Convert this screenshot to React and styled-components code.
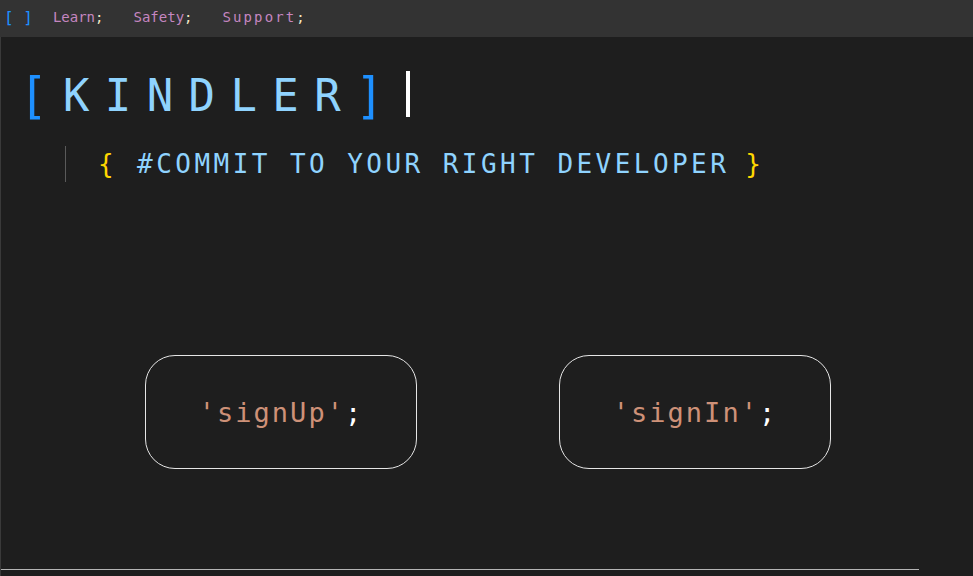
import React from 'react';
import styled, { createGlobalStyle } from 'styled-components';

const Global = createGlobalStyle`
  html, body { margin: 0; padding: 0; background: #1e1e1e; }
  body { font-family: "DejaVu Sans Mono", "Liberation Mono", monospace; }
  #root { height: 576px; }
`;

const Page = styled.div`
  display: flex;
  flex-direction: column;
  height: 576px;
  width: 973px;
  overflow: hidden;
`;

const TopBar = styled.nav`
  display: flex;
  align-items: center;
  height: 34px;
  padding-bottom: 3px;
  flex-shrink: 0;
  background: #333333;
  padding-left: 4px;
  gap: 21px;
  font-size: 14px;
`;

const Brackets = styled.span`
  color: #1e90ff;
  font-size: 16px;
  margin-right: -1px;
`;

const NavLink = styled.a`
  color: #c586c0;
  letter-spacing: ${p => p.$spacing || 0}px;
  margin-right: 9px;
  cursor: pointer;
  & > i { font-style: normal; color: #f5e9c5; }
`;

const Main = styled.main`
  flex: 1;
  display: flex;
  flex-direction: column;
  border-left: 1px solid #3a3a3a;
`;

const Title = styled.h1`
  display: flex;
  align-items: center;
  margin: 30px 0 0 20px;
  height: 56px;
  font-size: 44px;
  font-weight: 400;
  letter-spacing: 15.4px;
  color: #8fd3fe;
`;

const Bracket = styled.span`
  color: #1e90ff;
  display: inline-block;
  transform: scale(1.1, 1.12);
  margin-left: ${p => p.$shift || 0}px;
`;

const Caret = styled.span`
  display: inline-block;
  width: 4px;
  height: 46px;
  background: #ffffff;
  margin: -2px 0 0 7px;
`;

const Subtitle = styled.div`
  display: flex;
  align-items: center;
  margin: 23px 0 0 64px;
  height: 36px;
  border-left: 1px solid #5a5a5a;
  padding-left: 32px;
  font-size: 26px;
  letter-spacing: 3.45px;
  color: #8fd3fe;
`;

const Brace = styled.span`
  color: #ffd700;
  margin: ${p => p.$side === 'left' ? '0 20px 0 0' : '0 0 0 16px'};
`;

const ButtonRow = styled.div`
  display: flex;
  justify-content: space-evenly;
  margin-top: 173px;
  padding-left: 2px;
`;

const CodeButton = styled.button`
  width: 272px;
  height: 114px;
  border: 1px solid #e6e6e6;
  border-radius: 30px;
  background: transparent;
  font-family: inherit;
  font-size: 27px;
  letter-spacing: 2px;
  color: #ce9178;
  cursor: pointer;
  & > i { font-style: normal; color: #ffffff; }
`;

const Footer = styled.div`
  margin-top: auto;
  margin-bottom: 6px;
  width: 918px;
  height: 1px;
  background: #b4b4b4;
`;

export default function App() {
  return (
    <Page>
      <Global />
      <TopBar>
        <Brackets>[ ]</Brackets>
        <NavLink>Learn<i>;</i></NavLink>
        <NavLink>Safety<i>;</i></NavLink>
        <NavLink $spacing={2.1}>Support<i>;</i></NavLink>
      </TopBar>
      <Main>
        <Title>
          <Bracket>[</Bracket>KINDLER<Bracket $shift={1}>]</Bracket>
          <Caret />
        </Title>
        <Subtitle>
          <Brace $side="left">{'{'}</Brace>
          #COMMIT TO YOUR RIGHT DEVELOPER
          <Brace $side="right">{'}'}</Brace>
        </Subtitle>
        <ButtonRow>
          <CodeButton>'signUp'<i>;</i></CodeButton>
          <CodeButton>'signIn'<i>;</i></CodeButton>
        </ButtonRow>
        <Footer />
      </Main>
    </Page>
  );
}
